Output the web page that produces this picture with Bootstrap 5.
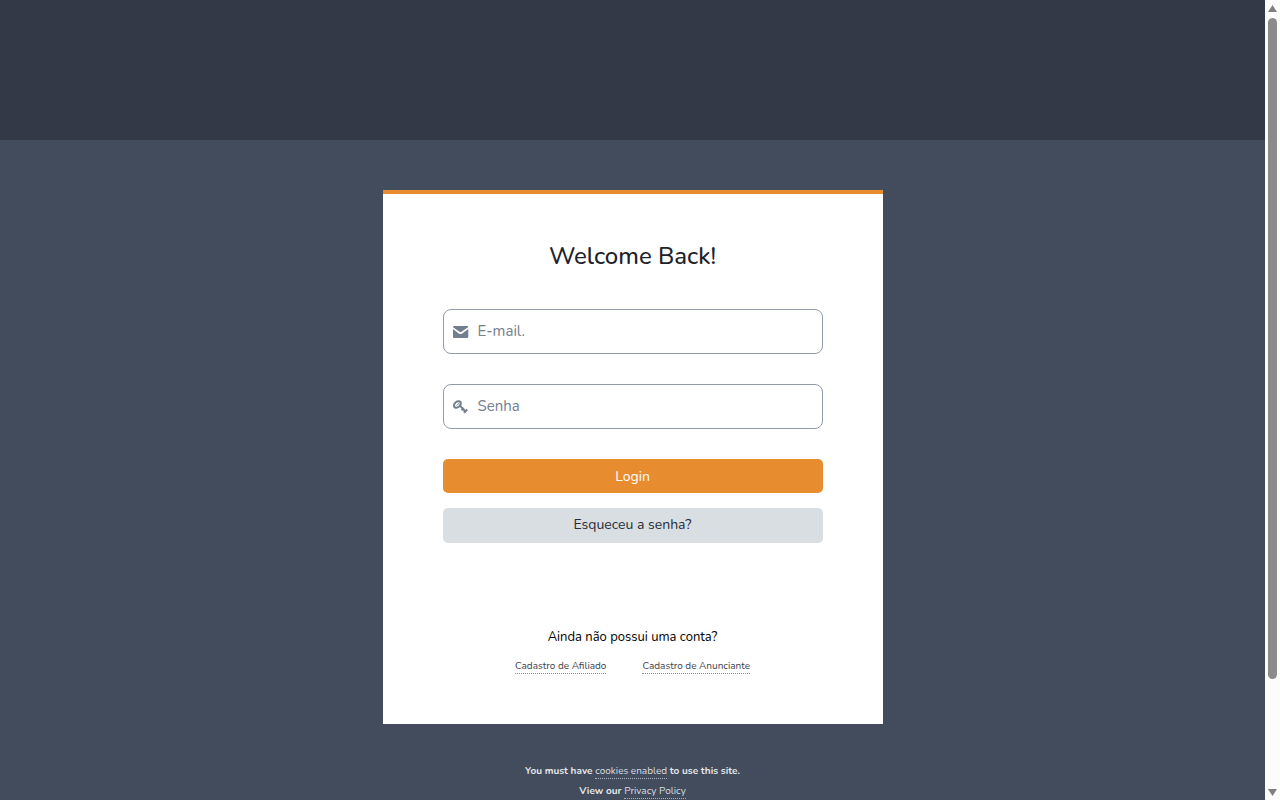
<!DOCTYPE html>
<html lang="pt-BR">
<head>
<meta charset="utf-8">
<meta name="viewport" content="width=device-width, initial-scale=1">
<title>Login</title>
<link href="https://cdn.jsdelivr.net/npm/bootstrap@5.3.0/dist/css/bootstrap.min.css" rel="stylesheet">
<style>
  body { font-family: Nunito, Lato, sans-serif; background: #434c5c; color: #1d222b; }
  .page-band { height: 140px; background: #333946; }
  .login-panel { max-width: 500px; margin-top: 50px; padding: 46px 60px 50px; border-top: 4px solid #e88c30; background: #fff; }
  .login-title { font-size: 24px; line-height: 32px; font-weight: 500; margin-bottom: 37px; }
  .field { height: 45px; margin-bottom: 30px; padding-left: 9px; gap: 9px; border: 1px solid #929ba8; border-radius: 8px; color: #737e8e; }
  .field input { font-size: 15px; line-height: 20px; padding: 10px 0 12px; }
  .field input::placeholder { color: #737e8e; }
  .btn-wide { font-size: 14px; line-height: 20px; padding: 8px 12px 6px; border-radius: 5px; }
  .btn-login, .btn-login:hover { background: #e88c30; color: #fff; }
  .btn-forgot, .btn-forgot:hover { background: #d8dee2; color: #272d36; margin-top: 15px; padding: 7px 12px 8px; }
  .signup { margin-top: 84px; }
  .signup-title { font-size: 13px; line-height: 20px; margin-bottom: 13px; }
  .signup-links { gap: 36px; }
  .fine-print { font-size: 10px; line-height: 20px; margin-top: 37px; color: #e4e7eb; font-weight: 700; }
  .dotted-link { font-size: 10px; line-height: 13px; font-weight: 400; color: #3c424c; text-decoration: none; border-bottom: 1px dotted #8a919c; }
  .fine-print .dotted-link { display: inline-block; color: #d8dee2; border-bottom-color: #aab1bb; }
  .scroll-rail { width: 15px; padding: 5px 0 4px; background: #fcfcfc; }
  .scroll-thumb { width: 9px; height: 83.6%; margin-top: 6px; border-radius: 5px; background: #8b8b8b; }
</style>
</head>
<body>
<div class="d-flex vh-100 overflow-hidden">
  <main class="flex-grow-1 overflow-hidden">
    <div class="page-band"></div>
    <section class="login-panel mx-auto text-center">
      <h1 class="login-title">Welcome Back!</h1>
      <form>
        <div class="field d-flex align-items-center">
          <label for="email" class="d-flex" aria-label="E-mail">
            <svg width="16" height="14" viewBox="0 0 16 14" fill="currentColor"><path d="M1 1h13.500Q15.500 1 15 2.300L8.500 6.800Q7.500 7.500 6.500 6.800L0 2.300Q0 1 1 1zM0 3.900l5.800 4.600Q7.500 9.700 9.200 8.500L15.300 3.900V11.800Q15 13 14 13h-13Q0 13 0 11.800z"/></svg>
          </label>
          <input id="email" type="email" class="form-control border-0 bg-transparent shadow-none" placeholder="E-mail.">
        </div>
        <div class="field d-flex align-items-center">
          <label for="senha" class="d-flex" aria-label="Senha">
            <svg width="16" height="14" viewBox="0 0 16 14" fill="none" stroke="currentColor" stroke-width="2"><path d="M1 5.500C1 3 4 .8 6.200 1.300C8.600 1.900 8.300 4.500 6.500 6.300C4.200 8.300 1 8.300 1 5.500zM7 5.600l5.800 6.400M8.600 10.200l2.200-2.200M11 12.700l3.200-3.200"/><path d="M3.600 5.800L6.200 3" stroke-width="1"/></svg>
          </label>
          <input id="senha" type="password" class="form-control border-0 bg-transparent shadow-none" placeholder="Senha">
        </div>
        <button type="submit" class="btn btn-wide btn-login w-100 border-0 d-block">Login</button>
        <button type="button" class="btn btn-wide btn-forgot w-100 border-0 d-block">Esqueceu a senha?</button>
      </form>
      <div class="signup">
        <p class="signup-title text-black">Ainda não possui uma conta?</p>
        <div class="signup-links d-flex justify-content-center">
          <a class="dotted-link" href="#">Cadastro de Afiliado</a>
          <a class="dotted-link" href="#">Cadastro de Anunciante</a>
        </div>
      </div>
    </section>
    <footer class="fine-print text-center">
      <div>You must have <a class="dotted-link" href="#">cookies enabled</a> to use this site.</div>
      <div>View our <a class="dotted-link" href="#">Privacy Policy</a></div>
    </footer>
  </main>
  <div class="scroll-rail d-flex flex-column align-items-center flex-shrink-0" aria-hidden="true">
    <svg width="9" height="7" viewBox="0 0 9 7" fill="#7f7f7f"><path d="M4.500 0L9 7H0z"/></svg>
    <div class="scroll-thumb"></div>
    <svg class="mt-auto" width="9" height="7" viewBox="0 0 9 7" fill="#7f7f7f"><path d="M0 0h9L4.500 7z"/></svg>
  </div>
</div>
<script src="https://cdn.jsdelivr.net/npm/bootstrap@5.3.0/dist/js/bootstrap.bundle.min.js"></script>
</body>
</html>
